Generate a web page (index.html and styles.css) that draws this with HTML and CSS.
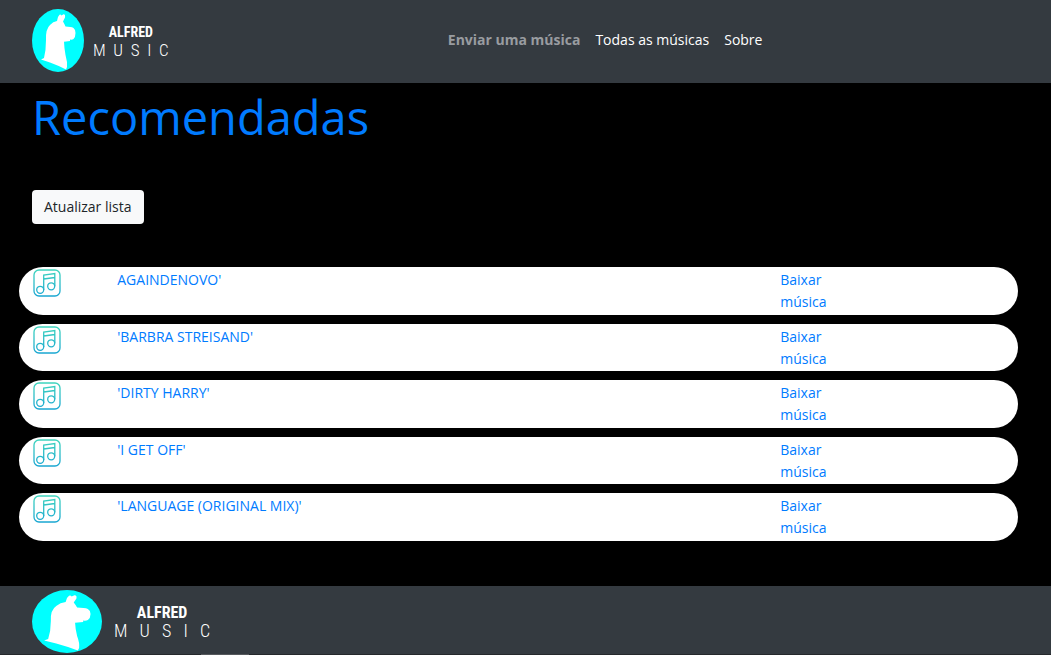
FILE: index.html
```html
<!DOCTYPE html>
<html lang="pt-BR">
<head>
<meta charset="utf-8">
<meta name="viewport" content="width=device-width, initial-scale=1">
<title>Alfred Music</title>
<link rel="stylesheet" href="styles.css">
</head>
<body>
<svg class="defs" width="0" height="0" aria-hidden="true">
  <defs>
    <linearGradient id="note-color" gradientUnits="userSpaceOnUse" x1="0" y1="0" x2="0" y2="28">
      <stop offset="0" stop-color="#3fd6bd"/>
      <stop offset="1" stop-color="#18a5d2"/>
    </linearGradient>
    <symbol id="llama" viewBox="0 0 52 63" preserveAspectRatio="none">
      <ellipse cx="26" cy="31.500" rx="26" ry="31.500" fill="#00ffff"/>
      <path fill="#fff" d="M26 8L27.500 5.800Q28.500 5 29.500 6.500L31.500 5.200Q33.500 5 33 8.500L31 12.500Q32.500 15 33.500 17.500Q39 17.500 41.500 19Q43.500 20.500 43.500 24Q43.500 28 41.500 30Q40 31 38 30.500L38 32L32 32.800Q32.200 39 33.500 46Q35.500 53 35 58L34 60.500Q25 56 18 53.500L9 50.500L12 49Q14 41 14 31Q13.500 20 18 16Q21 12.500 25 12Z"/>
    </symbol>
    <symbol id="note" viewBox="0 0 28 28">
      <g fill="none" stroke="url(#note-color)" stroke-width="1.300">
        <rect x="1" y="1" width="26" height="26" rx="5"/>
        <circle cx="7.200" cy="20.800" r="3.500"/>
        <circle cx="18.200" cy="17.300" r="3.500"/>
        <path d="M10.700 21V6L21.800 4.500V17.300M10.700 10L21.800 8.500"/>
      </g>
    </symbol>
  </defs>
</svg>

<header class="topbar">
  <a class="brand" href="#">
    <svg class="brand-mark" aria-hidden="true"><use href="#llama"/></svg>
    <span class="brand-name"><span class="brand-first">ALFRED</span><span class="brand-second">M  U  S  I  C</span></span>
  </a>
  <nav class="menu">
    <a class="menu-link current" href="#">Enviar uma música</a>
    <a class="menu-link" href="#">Todas as músicas</a>
    <a class="menu-link" href="#">Sobre</a>
  </nav>
</header>

<main class="content">
  <h1 class="title">Recomendadas</h1>
  <button class="refresh" type="button">Atualizar lista</button>
  <ul class="songs">
    <li class="song"><svg class="song-icon" aria-hidden="true"><use href="#note"/></svg><a class="song-name" href="#">AGAINDENOVO'</a><a class="song-download" href="#">Baixar música</a></li>
    <li class="song"><svg class="song-icon" aria-hidden="true"><use href="#note"/></svg><a class="song-name" href="#">'BARBRA STREISAND'</a><a class="song-download" href="#">Baixar música</a></li>
    <li class="song"><svg class="song-icon" aria-hidden="true"><use href="#note"/></svg><a class="song-name" href="#">'DIRTY HARRY'</a><a class="song-download" href="#">Baixar música</a></li>
    <li class="song"><svg class="song-icon" aria-hidden="true"><use href="#note"/></svg><a class="song-name" href="#">'I GET OFF'</a><a class="song-download" href="#">Baixar música</a></li>
    <li class="song"><svg class="song-icon" aria-hidden="true"><use href="#note"/></svg><a class="song-name" href="#">'LANGUAGE (ORIGINAL MIX)'</a><a class="song-download" href="#">Baixar música</a></li>
  </ul>
</main>

<footer class="bottom">
  <a class="brand brand-wide" href="#">
    <svg class="brand-mark" aria-hidden="true"><use href="#llama"/></svg>
    <span class="brand-name"><span class="brand-first">ALFRED</span><span class="brand-second">M   U   S   I   C</span></span>
  </a>
</footer>
</body>
</html>
```
FILE: styles.css
```css
* { box-sizing: border-box; }

body {
  margin: 0;
  background: #000;
  color: #212529;
  font-family: "Trebuchet MS", "Open Sans", sans-serif;
  font-size: 14px;
  line-height: 22px;
}

a { text-decoration: none; }

.defs { position: absolute; }

.topbar {
  display: grid;
  grid-template-columns: 2fr 3fr;
  column-gap: 35px;
  align-items: center;
  padding: 9px 32px 11px;
  background: #343a40;
}

.brand {
  display: flex;
  align-items: center;
  gap: 9px;
  color: #fff;
}

.brand-mark {
  width: 52px;
  height: 63px;
}

.brand-name {
  display: flex;
  flex-direction: column;
  align-items: center;
  font-family: "Roboto Condensed", "Roboto", sans-serif;
  font-size: 17px;
  line-height: 18px;
  white-space: pre;
}

.brand-first {
  font-size: 14px;
  font-weight: bold;
}

.brand-second { font-weight: 300; }

.menu {
  display: flex;
  flex-wrap: wrap;
  gap: 15px;
  padding-bottom: 2px;
}

.menu-link { color: #fff; }

.menu-link.current {
  color: #999ca0;
  font-weight: bold;
}

.content { padding: 5px 33px 45px 19px; }

.title {
  margin: 0 0 44px 13px;
  color: #007bff;
  font-size: 47px;
  font-weight: 400;
  line-height: 58px;
}

.refresh {
  display: block;
  margin: 0 0 43px 13px;
  padding: 6px 12px;
  border: 0;
  border-radius: 4px;
  background: #f8f9fa;
  color: #212529;
  font: inherit;
}

.songs {
  display: grid;
  grid-auto-rows: 1fr;
  gap: 9px;
  min-height: 274px;
  margin: 0;
  padding: 0;
  list-style: none;
}

.song {
  display: grid;
  grid-template-columns: 1fr 8fr 1fr 2fr;
  padding-top: 2px;
  border-radius: 24px;
  background: #fff;
}

.song-icon {
  width: 28px;
  height: 28px;
  margin-left: 14px;
}

.song-name { padding-left: 15px; color: #007bff; }

.song-download { padding: 0 12px; color: #007bff; }

.bottom {
  position: relative;
  padding: 4px 32px 1px;
  border-bottom: 1px solid #25282c;
  background: #343a40;
}

.bottom::after {
  content: "";
  position: absolute;
  bottom: -1px;
  left: 201px;
  width: 48px;
  height: 1px;
  background: #55585c;
}

.brand-wide { gap: 12px; }

.brand-wide .brand-mark { width: 70px; }

.brand-wide .brand-name { font-size: 18px; }

.brand-wide .brand-first { font-size: 16px; }
```
